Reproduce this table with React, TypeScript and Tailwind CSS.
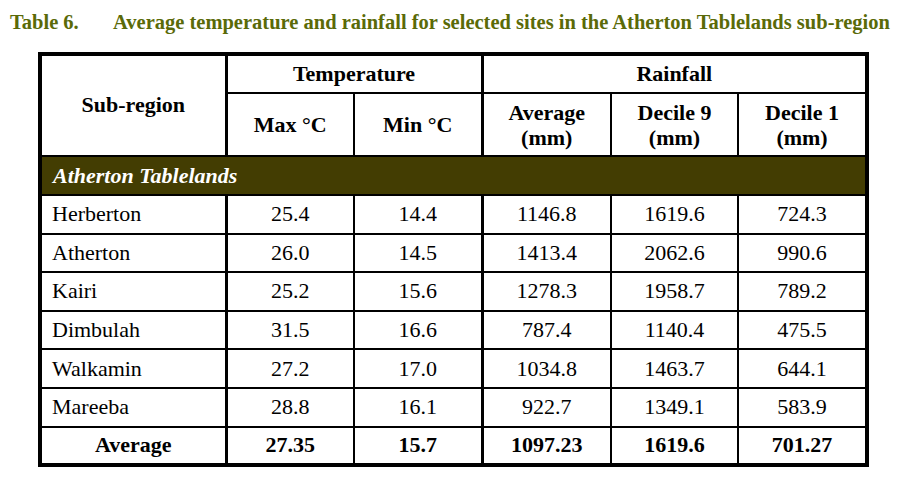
import React from "react";

const rows: [string, string, string, string, string, string][] = [
  ["Herberton", "25.4", "14.4", "1146.8", "1619.6", "724.3"],
  ["Atherton", "26.0", "14.5", "1413.4", "2062.6", "990.6"],
  ["Kairi", "25.2", "15.6", "1278.3", "1958.7", "789.2"],
  ["Dimbulah", "31.5", "16.6", "787.4", "1140.4", "475.5"],
  ["Walkamin", "27.2", "17.0", "1034.8", "1463.7", "644.1"],
  ["Mareeba", "28.8", "16.1", "922.7", "1349.1", "583.9"],
];

export default function App() {
  const cell = "border-2 border-black p-0 text-center align-middle";
  return (
    <div className="w-[903px] h-[478px] bg-white text-black overflow-hidden font-['Liberation_Serif','Times_New_Roman',serif]">
      <div className="flex pl-[10px] pt-[9px] h-[52px] text-[20.5px] font-bold text-[#5a6a08] leading-[26px] whitespace-nowrap">
        <span className="w-[103px] shrink-0">Table 6.</span>
        <span className="shrink-0">Average temperature and rainfall for selected sites in the Atherton Tablelands sub-region</span>
      </div>
      <div className="pl-[38px]">
        <table className="border-collapse table-fixed w-[831px] border-4 border-black text-[22px] leading-none">
          <colgroup>
            <col className="w-[186px]" />
            <col className="w-[128px]" />
            <col className="w-[128px]" />
            <col className="w-[129px]" />
            <col className="w-[127px]" />
            <col className="w-[129px]" />
          </colgroup>
          <thead>
            <tr className="h-[39px] font-bold">
              <th rowSpan={2} className={`${cell} border-r-[3px] pb-[2px]`}>Sub-region</th>
              <th colSpan={2} className={`${cell} border-r-[3px]`}>Temperature</th>
              <th colSpan={3} className={cell}>Rainfall</th>
            </tr>
            <tr className="h-[63px] font-bold">
              <th className={cell}>Max °C</th>
              <th className={`${cell} border-r-[3px]`}>Min °C</th>
              <th className={`${cell} leading-[25px]`}>Average<br />(mm)</th>
              <th className={`${cell} leading-[25px]`}>Decile 9<br />(mm)</th>
              <th className={`${cell} leading-[25px]`}>Decile 1<br />(mm)</th>
            </tr>
          </thead>
          <tbody>
            <tr className="h-[39px] bg-[#433d02]">
              <td colSpan={6} className="border-2 border-black pl-[11px] text-left align-middle text-white font-bold italic">
                Atherton Tablelands
              </td>
            </tr>
            {rows.map((r) => (
              <tr key={r[0]} className="h-[38.6px]">
                <td className="border-2 border-r-[3px] border-black pl-[10px] text-left align-middle">{r[0]}</td>
                <td className={cell}>{r[1]}</td>
                <td className={`${cell} border-r-[3px]`}>{r[2]}</td>
                <td className={cell}>{r[3]}</td>
                <td className={cell}>{r[4]}</td>
                <td className={cell}>{r[5]}</td>
              </tr>
            ))}
            <tr className="h-[38px] font-bold">
              <td className={`${cell} border-r-[3px]`}>Average</td>
              <td className={cell}>27.35</td>
              <td className={`${cell} border-r-[3px]`}>15.7</td>
              <td className={cell}>1097.23</td>
              <td className={cell}>1619.6</td>
              <td className={cell}>701.27</td>
            </tr>
          </tbody>
        </table>
      </div>
    </div>
  );
}
